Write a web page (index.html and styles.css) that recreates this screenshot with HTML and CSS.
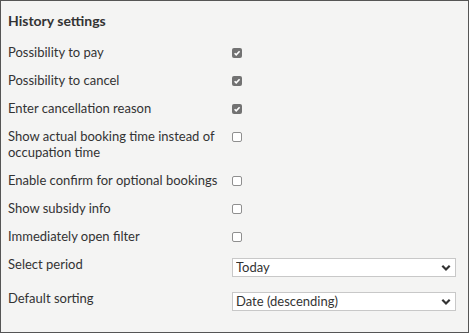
FILE: index.html
```html
<!DOCTYPE html>
<html>
<head>
<meta charset="utf-8">
<link rel="stylesheet" href="styles.css">
</head>
<body>
<div class="panel">
  <h2 class="title">History settings</h2>
  <div class="grid">
    <div class="label">Possibility to pay</div>
    <div class="ctrl"><span class="cb checked"><svg viewBox="0 0 10 10" width="10" height="10"><path d="M2.6 5.3 L4.2 6.9 L7.6 3.2" fill="none" stroke="#fff" stroke-width="1.6"/></svg></span></div>

    <div class="label">Possibility to cancel</div>
    <div class="ctrl"><span class="cb checked"><svg viewBox="0 0 10 10" width="10" height="10"><path d="M2.6 5.3 L4.2 6.9 L7.6 3.2" fill="none" stroke="#fff" stroke-width="1.6"/></svg></span></div>

    <div class="label">Enter cancellation reason</div>
    <div class="ctrl"><span class="cb checked"><svg viewBox="0 0 10 10" width="10" height="10"><path d="M2.6 5.3 L4.2 6.9 L7.6 3.2" fill="none" stroke="#fff" stroke-width="1.6"/></svg></span></div>

    <div class="label">Show actual booking time instead of occupation time</div>
    <div class="ctrl"><span class="cb"></span></div>

    <div class="label">Enable confirm for optional bookings</div>
    <div class="ctrl"><span class="cb"></span></div>

    <div class="label">Show subsidy info</div>
    <div class="ctrl"><span class="cb"></span></div>

    <div class="label">Immediately open filter</div>
    <div class="ctrl"><span class="cb"></span></div>

    <div class="label">Select period</div>
    <div class="ctrl">
      <div class="select-wrap">
        <select class="select"><option>Today</option></select>
        <svg class="chev" viewBox="0 0 10 8" width="10" height="8"><path d="M1.3 1.8 L5 5.5 L8.7 1.8" fill="none" stroke="#333" stroke-width="2.2"/></svg>
      </div>
    </div>

    <div class="label">Default sorting</div>
    <div class="ctrl">
      <div class="select-wrap">
        <select class="select"><option>Date (descending)</option></select>
        <svg class="chev" viewBox="0 0 10 8" width="10" height="8"><path d="M1.3 1.8 L5 5.5 L8.7 1.8" fill="none" stroke="#333" stroke-width="2.2"/></svg>
      </div>
    </div>
  </div>
</div>
</body>
</html>
```
FILE: styles.css
```css
html, body {
  margin: 0;
  padding: 0;
  background: #f4f4f3;
}
.panel {
  box-sizing: border-box;
  width: 469px;
  height: 333px;
  border: 1px solid #555;
  background: #f4f4f3;
  padding: 10px 12px 0 7px;
  font-family: Lato, "Open Sans", sans-serif;
  color: #333;
}
.title {
  margin: 0 0 13px 0;
  font-size: 14px;
  line-height: 20px;
  font-weight: bold;
  color: #333;
}
.grid {
  display: grid;
  grid-template-columns: 224px 224px;
  row-gap: 12px;
  align-items: start;
}
.label {
  font-size: 13px;
  line-height: 16px;
  padding-right: 8px;
}
.ctrl {
  display: flex;
  align-items: flex-start;
  min-height: 16px;
}
.cb {
  box-sizing: border-box;
  display: block;
  width: 10px;
  height: 10px;
  margin-top: 4px;
  border: 1px solid #8f8f8f;
  border-radius: 2px;
  background: #fff;
}
.cb.checked {
  border: none;
  background: #727272;
}
.cb svg {
  display: block;
}
.select-wrap {
  position: relative;
  width: 224px;
  margin: 2px 0 1px 0;
}
.select {
  display: block;
  box-sizing: border-box;
  width: 224px;
  height: 19px;
  margin: 0;
  padding: 0 0 0 3px;
  border: 1px solid #c8c8c8;
  border-radius: 0;
  background: #fff;
  -webkit-appearance: none;
  appearance: none;
  font-family: Lato, "Open Sans", sans-serif;
  font-size: 13px;
  line-height: 17px;
  color: #333;
  outline: none;
}
.chev {
  position: absolute;
  right: 5px;
  top: 6px;
  pointer-events: none;
}
```
